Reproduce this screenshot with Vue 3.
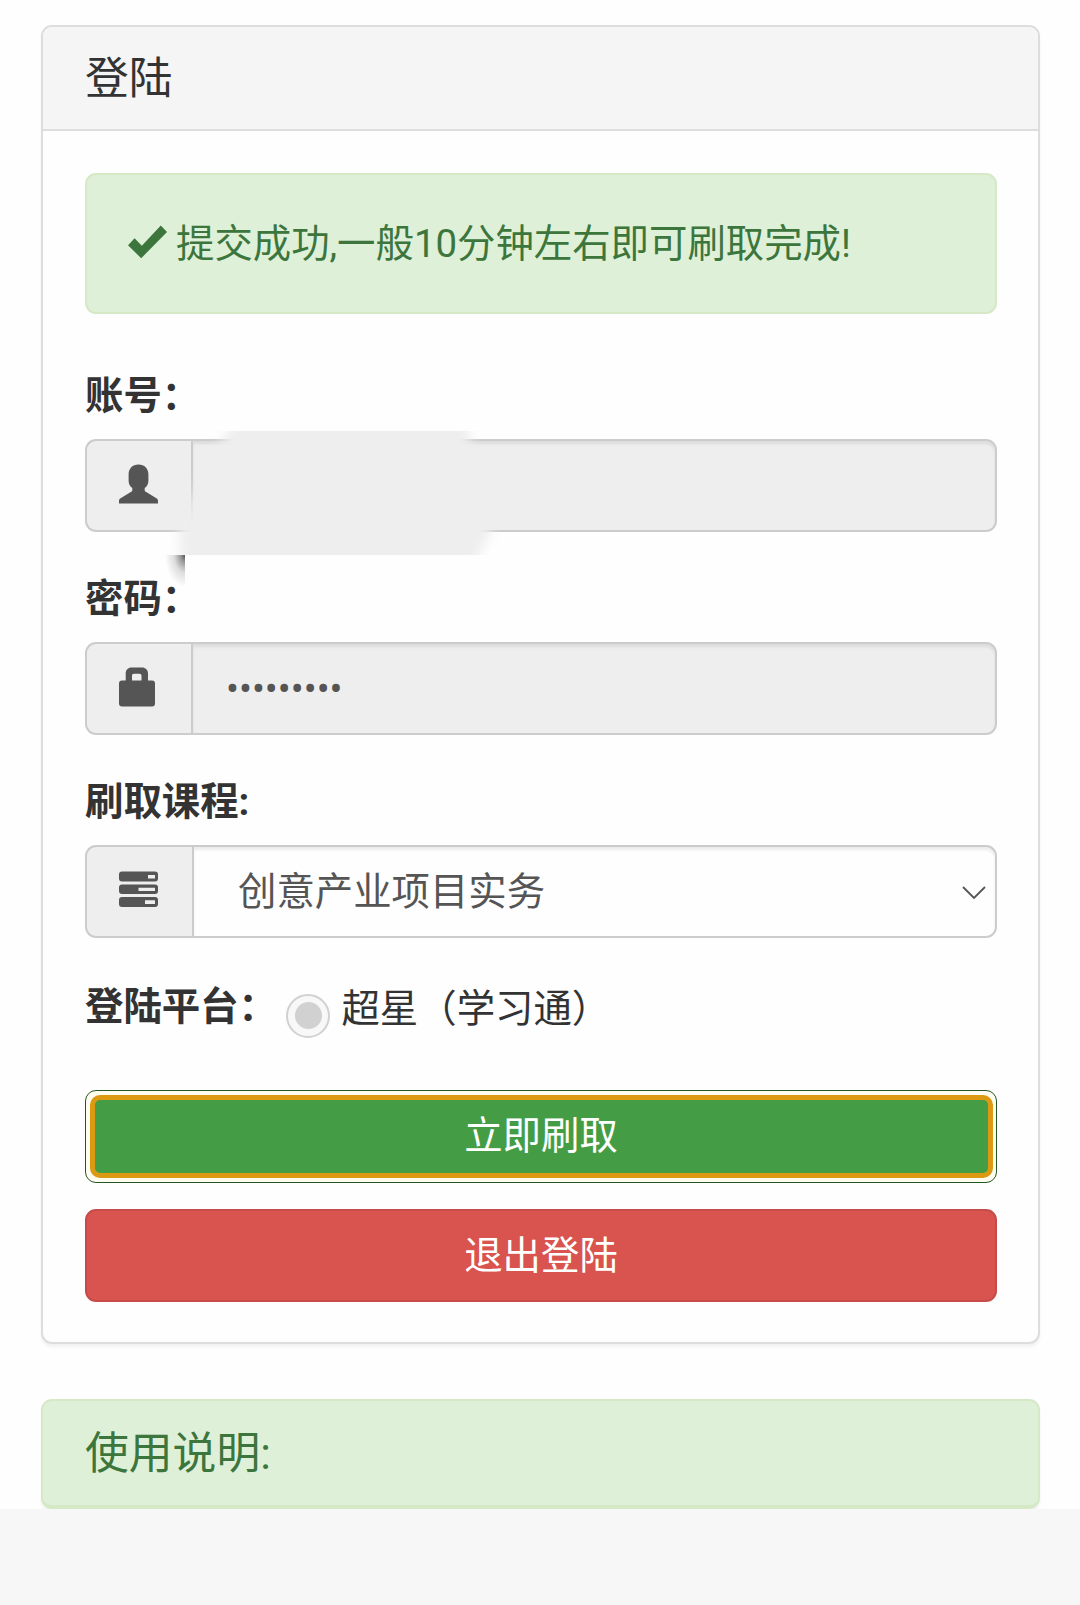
<template>
  <div class="page">
    <section class="panel">
      <header class="panel-heading">
        <h3 class="panel-title">登陆</h3>
      </header>

      <form class="panel-body" @submit.prevent>
        <div class="alert" role="alert">
          <svg class="alert-icon" viewBox="0 0 39 34" aria-hidden="true">
            <path d="M0 20.2 6.6 13.2 13.8 20.8 32.8 0.6 39 7 13.2 33.2Z" />
          </svg>
          <span class="alert-text">{{ mensagem }}</span>
        </div>

        <label class="form-label" for="account">账号：</label>
        <div class="input-group">
          <span class="addon">
            <svg class="icon" viewBox="0 0 39 40" aria-hidden="true">
              <path d="M19.5 0.5C25.5 0.5 29.4 4.5 29.4 10.5V16.5C29.4 20 28 22.4 25.7 24V26.2C25.7 27 26 27.4 26.8 27.8L37.4 34.2C38.6 35 39 35.8 39 37V39.5H0V37C0 35.8 0.4 35 1.6 34.2L12.2 27.8C13 27.4 13.3 27 13.3 26.2V24C11 22.4 9.6 20 9.6 16.5V10.5C9.6 4.5 13.5 0.5 19.5 0.5Z" />
            </svg>
          </span>
          <input id="account" class="control is-disabled" type="text" disabled />
          <svg class="smudge" viewBox="0 0 340 124" aria-hidden="true">
            <defs>
              <filter id="soft" x="-20%" y="-40%" width="140%" height="180%">
                <feGaussianBlur stdDeviation="6" />
              </filter>
            </defs>
            <path d="M84-30H309L310 52 332 98 302 160H22L19 98 32 66 66 4Z" filter="url(#soft)" />
          </svg>
          <span class="shade"></span>
        </div>

        <label class="form-label" for="password">密码：</label>
        <div class="input-group">
          <span class="addon">
            <svg class="icon" viewBox="0 0 39 40" aria-hidden="true">
              <path fill-rule="evenodd" d="M12.5 0.5H23C26.5 0.5 29 3 29 6.5V13.5H33C35 13.5 36 14.5 36 16.5V36.5C36 38.5 35 39.5 33 39.5H3C1 39.5 0 38.5 0 36.5V16.5C0 14.5 1 13.5 3 13.5H6.7V6.5C6.7 3 9 .5 12.5 .5ZM15 6.8C13.7 6.8 13 7.5 13 8.8V13.5H22.5V8.8C22.5 7.5 21.8 6.8 20.5 6.8Z" />
            </svg>
          </span>
          <input id="password" v-model="senha" class="control is-disabled" type="password" disabled />
        </div>

        <label class="form-label" for="course">刷取课程:</label>
        <div class="input-group">
          <span class="addon addon-wide">
            <svg class="icon" viewBox="0 0 39 40" aria-hidden="true">
              <path fill-rule="evenodd" d="M3 1.5H36Q39 1.5 39 4.5V8.5Q39 11.5 36 11.5H3Q0 11.5 0 8.5V4.5Q0 1.5 3 1.5ZM29 5V8.5H36V5Z" />
              <path fill-rule="evenodd" d="M3 14.5H36Q39 14.5 39 17.5V21Q39 24 36 24H3Q0 24 0 21V17.5Q0 14.5 3 14.5ZM19.5 17.7V21H36V17.7Z" />
              <path fill-rule="evenodd" d="M3 27H36Q39 27 39 30V34Q39 37 36 37H3Q0 37 0 34V30Q0 27 3 27ZM26 30.3V34H36V30.3Z" />
            </svg>
          </span>
          <select id="course" v-model="curso" class="control course-select">
            <option v-for="item in cursos" :key="item" :value="item">{{ item }}</option>
          </select>
          <svg class="chevron" viewBox="0 0 24 14" aria-hidden="true">
            <polyline points="1 1 12 12 23 1" />
          </svg>
        </div>

        <div class="platform">
          <span class="form-label platform-label">登陆平台：</span>
          <span class="radio"></span>
          <span class="platform-name">超星（学习通）</span>
        </div>

        <button class="btn btn-success" type="submit">立即刷取</button>
        <button class="btn btn-danger" type="button">退出登陆</button>
      </form>
    </section>

    <section class="panel panel-success">
      <h3 class="panel-title">使用说明:</h3>
    </section>
  </div>
</template>

<script setup>
import { ref } from 'vue';

const mensagem = '提交成功,一般10分钟左右即可刷取完成!';
const cursos = ['创意产业项目实务'];

const curso = ref(cursos[0]);
const senha = ref('123456789');
</script>

<style>
body {
  margin: 0;
  background: #f7f7f7;
}
</style>

<style scoped>
.page {
  box-sizing: border-box;
  height: 1509px;
  padding: 25px 40px 0 41px;
  background: #fefefe;
  font-family: Roboto, "Noto Sans CJK SC", sans-serif;
  font-size: 38.4px;
  color: #333;
}

.page * {
  box-sizing: border-box;
}

.panel {
  height: 1319px;
  border: 2px solid #ddd;
  border-radius: 11px;
  background: #fefefe;
  box-shadow: 0 3px 3px rgba(0, 0, 0, 0.05);
}

.panel-heading {
  height: 104px;
  padding: 27px 42px 0;
  border-bottom: 2px solid #ddd;
  border-radius: 9px 9px 0 0;
  background: #f5f5f5;
}

.panel-title {
  margin: 0;
  font-size: 43.8px;
  font-weight: 400;
  line-height: 50px;
}

.panel-body {
  padding: 42px 41px 0 42px;
}

/* Mensagem de sucesso */
.alert {
  display: flex;
  align-items: center;
  height: 141px;
  padding: 0 41px 4px;
  border: 2px solid #d6e9c6;
  border-radius: 11px;
  background: #dff0d8;
  color: #3c763d;
  white-space: nowrap;
}

.alert-icon {
  width: 39px;
  height: 34px;
  margin-right: 9px;
  fill: currentColor;
}

.alert-text {
  padding-bottom: 4px;
}

/* Campos */
.form-label {
  display: block;
  height: 54px;
  margin-top: 55px;
  margin-bottom: 16px;
  font-weight: 700;
  line-height: 54px;
}

.input-group {
  position: relative;
  display: flex;
  height: 93px;
}

.input-group + .form-label {
  margin-top: 40px;
}

.addon {
  display: flex;
  align-items: center;
  width: 106px;
  padding-left: 32px;
  border: 2px solid #ccc;
  border-right: 0;
  border-radius: 11px 0 0 11px;
  background: #eee;
}

.addon-wide {
  width: 107px;
}

.icon {
  width: 39px;
  height: 40px;
  margin-bottom: 3px;
  fill: #555;
}

.control {
  flex: 1;
  min-width: 0;
  height: 93px;
  margin: 0;
  padding: 0 33px 1px;
  border: 2px solid #ccc;
  border-radius: 0 11px 11px 0;
  outline: none;
  background: #fefefe;
  box-shadow: inset 0 3px 3px rgba(0, 0, 0, 0.075);
  color: #555;
  font: inherit;
  opacity: 1;
  appearance: none;
}

.control.is-disabled {
  background: #eee;
}

.course-select {
  padding: 0 44px 1px;
}

.chevron {
  position: absolute;
  top: 41px;
  right: 11px;
  width: 24px;
  height: 14px;
  fill: none;
  stroke: #555;
  stroke-width: 1.8;
}

/* Mancha que cobre o número da conta */
.smudge {
  position: absolute;
  top: -8px;
  left: 75px;
  width: 340px;
  height: 124px;
  overflow: hidden;
  fill: #eee;
}

.shade {
  position: absolute;
  top: 116px;
  left: 80px;
  width: 20px;
  height: 32px;
  background: radial-gradient(ellipse 20px 32px at 100% 0, #555 0%, #999 22%, #ddd 55%, transparent 100%);
}

/* Plataforma */
.platform {
  display: flex;
  align-items: flex-start;
  height: 54px;
  margin-top: 41px;
  line-height: 54px;
  white-space: nowrap;
}

.platform-label {
  margin: 0;
  padding-top: 1px;
}

.radio {
  position: relative;
  width: 44px;
  height: 44px;
  margin: 14.5px 11px 0 9.5px;
  border: 2.75px solid #d1d1d1;
  border-radius: 50%;
  background: #f8f8f8;
}

.radio::after {
  content: "";
  position: absolute;
  inset: 6.5px;
  border-radius: 50%;
  background: #d1d1d1;
}

.platform-name {
  padding-top: 3px;
}

/* Botões */
.btn {
  display: block;
  width: 100%;
  height: 93px;
  padding: 0 0 8px;
  border: 2px solid transparent;
  border-radius: 11px;
  color: #fff;
  font: inherit;
}

.btn-success {
  position: relative;
  margin-top: 57px;
  padding-bottom: 9px;
  border: 1.5px solid #255625;
  background: #fffdf0;
  z-index: 0;
}

.btn-success::before {
  content: "";
  position: absolute;
  z-index: -1;
  inset: 4px 3.5px;
  border: 5.5px solid #db9a12;
  border-radius: 10px;
  background: #449d44;
}

.btn-danger {
  margin-top: 26px;
  border-color: #c64c49;
  background: #d9534f;
}

.panel-success {
  height: 110px;
  margin-top: 55px;
  padding: 28px 42px 0;
  border-color: #d6e9c6;
  border-bottom-width: 4px;
  background: #dff0d8;
  color: #3c763d;
}
</style>
